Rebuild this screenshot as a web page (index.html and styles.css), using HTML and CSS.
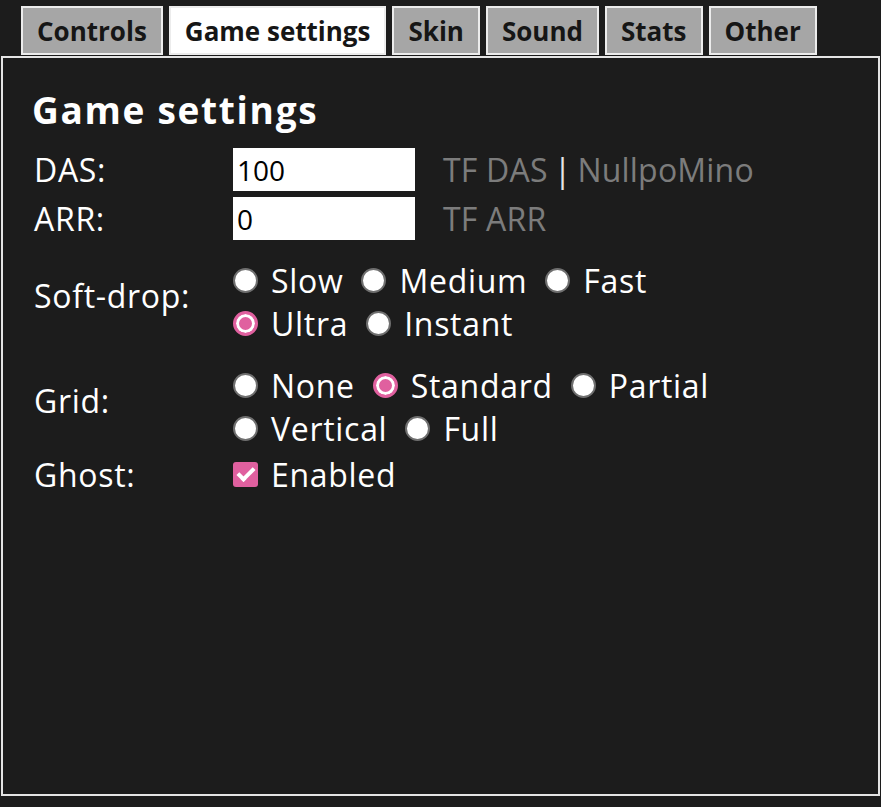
FILE: index.html
```html
<!DOCTYPE html>
<html lang="en">
<head>
<meta charset="utf-8">
<title>Game settings</title>
<link rel="stylesheet" href="styles.css">
</head>
<body>
<div class="app">
  <nav class="tabs">
    <div class="tab">Controls</div>
    <div class="tab active">Game settings</div>
    <div class="tab">Skin</div>
    <div class="tab">Sound</div>
    <div class="tab">Stats</div>
    <div class="tab">Other</div>
  </nav>
  <section class="panel">
    <h1 class="title">Game settings</h1>
    <div class="row">
      <span class="label">DAS:</span>
      <div class="field">
        <input class="num" type="text" value="100">
        <span class="hint">TF DAS<span class="sep">|</span>NullpoMino</span>
      </div>
    </div>
    <div class="row">
      <span class="label">ARR:</span>
      <div class="field">
        <input class="num" type="text" value="0">
        <span class="hint">TF ARR</span>
      </div>
    </div>
    <div class="row">
      <span class="label">Soft-drop:</span>
      <div class="options">
        <div class="line">
          <label class="opt"><input class="radio" type="radio" name="sd">Slow</label>
          <label class="opt"><input class="radio" type="radio" name="sd">Medium</label>
          <label class="opt"><input class="radio" type="radio" name="sd">Fast</label>
        </div>
        <div class="line">
          <label class="opt"><input class="radio" type="radio" name="sd" checked>Ultra</label>
          <label class="opt"><input class="radio" type="radio" name="sd">Instant</label>
        </div>
      </div>
    </div>
    <div class="row">
      <span class="label">Grid:</span>
      <div class="options">
        <div class="line">
          <label class="opt"><input class="radio" type="radio" name="grid">None</label>
          <label class="opt"><input class="radio" type="radio" name="grid" checked>Standard</label>
          <label class="opt"><input class="radio" type="radio" name="grid">Partial</label>
        </div>
        <div class="line">
          <label class="opt"><input class="radio" type="radio" name="grid">Vertical</label>
          <label class="opt"><input class="radio" type="radio" name="grid">Full</label>
        </div>
      </div>
    </div>
    <div class="row row-ghost">
      <span class="label">Ghost:</span>
      <div class="line">
        <label class="opt"><input class="check" type="checkbox" checked>Enabled</label>
      </div>
    </div>
  </section>
</div>
</body>
</html>
```

FILE: styles.css
```css
html, body {
  margin: 0;
  background: #1c1c1c;
}

body {
  font-family: "Open Sans", "Noto Sans", sans-serif;
  color: #ffffff;
}

.app {
  padding: 6px 1px 0 1px;
}

.tabs {
  display: flex;
  gap: 6px;
  padding-left: 20px;
  margin-bottom: 1px;
}

.tab {
  height: 49px;
  box-sizing: border-box;
  border: 2px solid #ececec;
  background: #a6a6a6;
  color: #161616;
  font-weight: 700;
  font-size: 26px;
  line-height: 46px;
  padding: 0 14px;
}

.tab.active {
  background: #ffffff;
}

.panel {
  height: 740px;
  box-sizing: border-box;
  border: 2px solid #e4e4e4;
  padding: 26px 29px;
}

.title {
  margin: 0 0 13px 0;
  font-size: 37px;
  font-weight: 700;
  letter-spacing: 1.7px;
  line-height: normal;
}

.row {
  display: grid;
  grid-template-columns: 199px 1fr;
  align-items: center;
  padding-left: 2px;
  font-size: 32px;
  letter-spacing: 0.7px;
}

.row + .row {
  margin-top: 6px;
}

.row.row-ghost {
  margin-top: 3px;
}

.label {
  line-height: normal;
}

.field {
  display: flex;
  align-items: center;
  gap: 28px;
}

.num {
  width: 182px;
  height: 43px;
  box-sizing: border-box;
  margin: 0;
  border: 0;
  padding: 0 4px;
  background: #ffffff;
  color: #000000;
  font-family: "Open Sans", sans-serif;
  font-size: 28px;
  outline: none;
}

.hint {
  color: #7c7c7c;
  letter-spacing: 0.2px;
}

.sep {
  color: #e6e6e6;
  margin: 0 6px;
}

.options {
  padding-top: 13px;
}

.line {
  display: flex;
  align-items: center;
  height: 43px;
}

.opt {
  display: flex;
  align-items: center;
  margin-right: 18px;
}

.radio {
  appearance: none;
  -webkit-appearance: none;
  width: 25px;
  height: 25px;
  box-sizing: border-box;
  margin: 0 13px 0 0;
  border-radius: 50%;
  border: 2px solid #6f6f6f;
  background: #ffffff;
}

.radio:checked {
  border: 3px solid #e0609f;
  background: #e0609f;
  box-shadow: inset 0 0 0 3px #ffffff;
}

.check {
  appearance: none;
  -webkit-appearance: none;
  position: relative;
  width: 25px;
  height: 25px;
  box-sizing: border-box;
  margin: 0 13px 0 0;
  border-radius: 3px;
  background: #e0609f;
}

.check::after {
  content: "";
  position: absolute;
  left: 8px;
  top: 2px;
  width: 6px;
  height: 13px;
  border-right: 4px solid #ffffff;
  border-bottom: 4px solid #ffffff;
  transform: rotate(45deg);
}
```
